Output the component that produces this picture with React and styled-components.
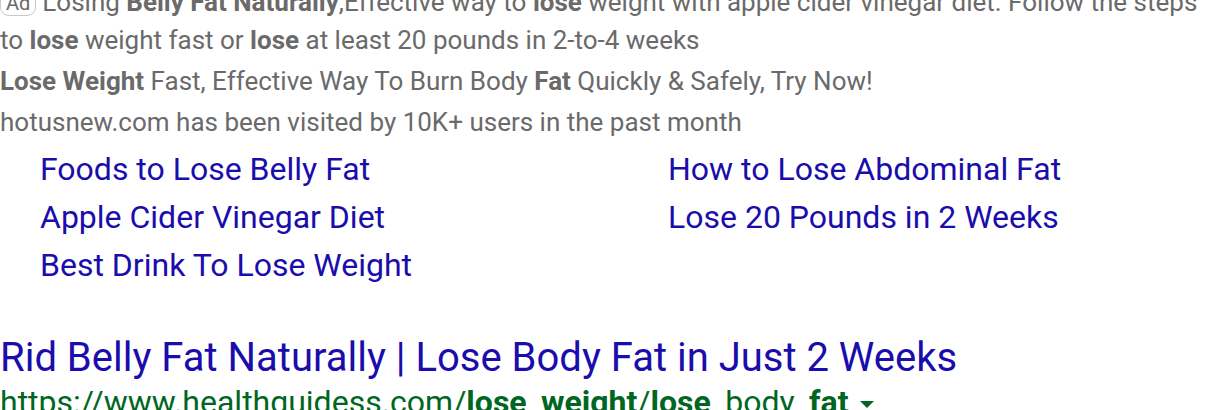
import React from 'react';
import styled, { createGlobalStyle } from 'styled-components';

const GlobalStyle = createGlobalStyle`
  html, body {
    margin: 0;
    padding: 0;
    background: #fff;
    overflow: hidden;
  }
  body {
    font-family: Roboto, "Liberation Sans", Arial, sans-serif;
  }
`;

const Page = styled.div`
  width: 1216px;
  height: 410px;
  overflow: hidden;
`;

// the ad block is scrolled a bit, its first line sits partly above the top
const Result = styled.div`
  margin-top: -17px;
`;

const Desc = styled.div`
  color: #6a6a6a;
  font-size: 26px;
  line-height: 38px;
  margin-top: ${(props) => (props.gap ? '3px' : '0')};
  b {
    font-weight: 700;
  }
`;

const AdBadge = styled.span`
  display: inline-block;
  border: 1px solid #c9c9c9;
  border-radius: 9px;
  font-size: 20px;
  line-height: 24px;
  padding: 0 5px;
  margin-right: 6px;
  color: #6a6a6a;
  vertical-align: 1px;
`;

const SiteLinks = styled.div`
  display: grid;
  grid-template-columns: 628px 1fr;
  padding-left: 40px;
  margin-top: 4px;
`;

const SiteLink = styled.a`
  color: #1a0dab;
  font-size: 32px;
  line-height: 48px;
  text-decoration: none;
`;

const Title = styled.a`
  display: block;
  color: #1a0dab;
  font-size: 40px;
  line-height: 48px;
  margin-top: 45px;
  text-decoration: none;
`;

const Url = styled.div`
  color: #006621;
  font-size: 32px;
  line-height: 40px;
  white-space: nowrap;
  b {
    font-weight: 700;
  }
`;

const Caret = styled.span`
  display: inline-block;
  width: 0;
  height: 0;
  margin-left: 12px;
  border-left: 7px solid transparent;
  border-right: 7px solid transparent;
  border-top: 7px solid #006621;
  vertical-align: middle;
`;

const links = [
  'Foods to Lose Belly Fat',
  'How to Lose Abdominal Fat',
  'Apple Cider Vinegar Diet',
  'Lose 20 Pounds in 2 Weeks',
  'Best Drink To Lose Weight',
];

export default function App() {
  return (
    <Page>
      <GlobalStyle />
      <Result>
        <Desc>
          <AdBadge>Ad</AdBadge>Losing <b>Belly Fat Naturally</b>,Effective way to <b>lose</b> weight with apple cider vinegar diet. Follow the steps to <b>lose</b> weight fast or <b>lose</b> at least 20 pounds in 2-to-4 weeks
        </Desc>
        <Desc gap>
          <b>Lose Weight</b> Fast, Effective Way To Burn Body <b>Fat</b> Quickly &amp; Safely, Try Now!
        </Desc>
        <Desc gap>hotusnew.com has been visited by 10K+ users in the past month</Desc>
        <SiteLinks>
          {links.map((l) => (
            <SiteLink key={l} href="#">{l}</SiteLink>
          ))}
        </SiteLinks>
        <Title href="#">Rid Belly Fat Naturally | Lose Body Fat in Just 2 Weeks</Title>
        <Url>
          https://www.healthguidess.com/<b>lose</b>_<b>weight</b>/<b>lose</b>_body_<b>fat</b>
          <Caret />
        </Url>
      </Result>
    </Page>
  );
}
